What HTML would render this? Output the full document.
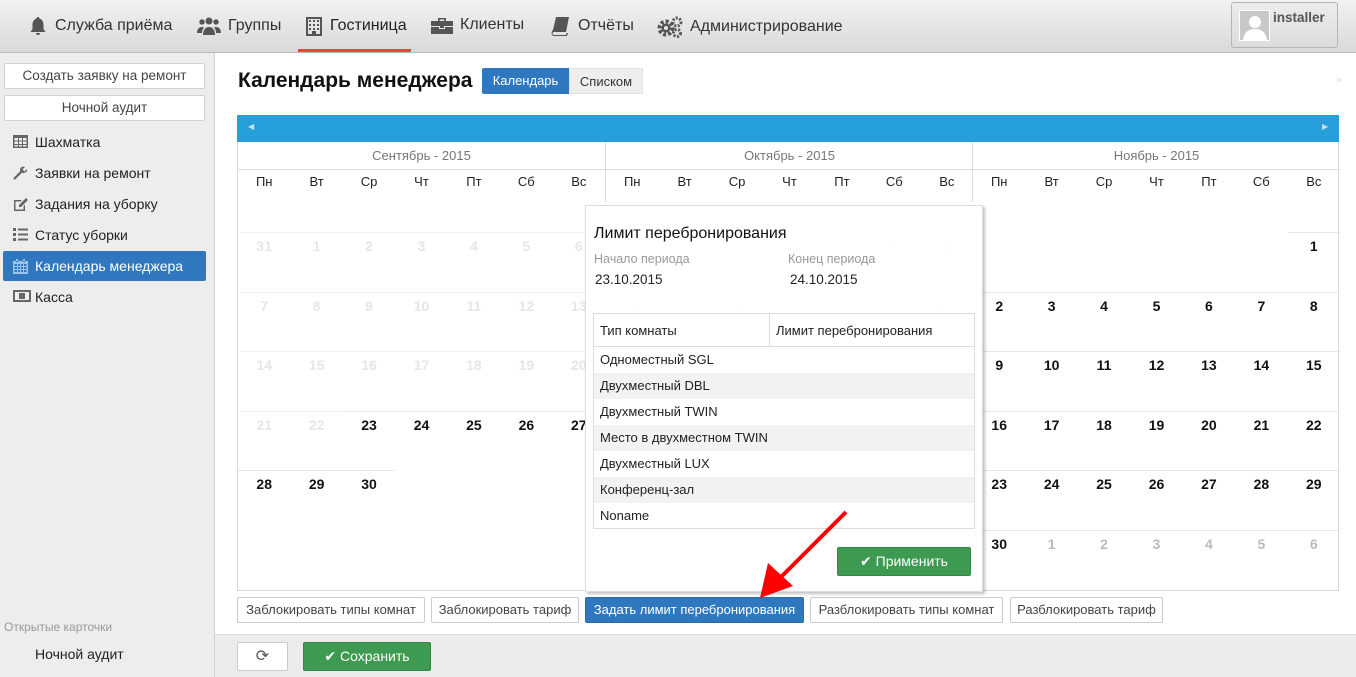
<!DOCTYPE html>
<html><head><meta charset="utf-8">
<style>
*{box-sizing:border-box;margin:0;padding:0}
body{width:1356px;height:677px;overflow:hidden;font-family:"Liberation Sans","DejaVu Sans",sans-serif;background:#fff;position:relative;color:#222}
.abs{position:absolute}
#top{left:0;top:0;width:1356px;height:53px;background:linear-gradient(#f2f2f2,#d9d9d9);border-bottom:1px solid #bdbdbd}
.nav{top:16px;font-size:16px;color:#333;display:flex;align-items:center;gap:7px}
.nav svg{fill:#555}
#side{left:0;top:53px;width:215px;height:624px;background:#ededed;border-right:1px solid #cfcfcf}
.sbtn{position:absolute;left:4px;width:201px;height:26px;background:#fff;border:1px solid #d0d0d0;border-radius:2px;font-size:13.5px;color:#444;text-align:center;line-height:24px}
.mi{position:absolute;left:3px;width:203px;height:30px;font-size:14px;color:#222;line-height:30px;padding-left:32px}
.mi svg{position:absolute;left:10px;top:8px;fill:#666}
.mi.act{background:#2f78bf;color:#fff;border-radius:2px}
.mi.act svg{fill:#9cc3ea}
.cal{position:absolute;top:232px;width:367px;display:grid;grid-template-columns:repeat(7,1fr);grid-auto-rows:59.6px}
.cal div{font-weight:bold;font-size:14px;text-align:center;padding-top:5px;border-top:1px solid #e6e6e6;color:#111}
.cal .e{border-top-color:transparent}
.cal .f{color:#e6e6e6;border-top-color:#f3f3f3}
.cal .n{color:#bbb}
.mh{position:absolute;top:142px;height:28px;width:367px;text-align:center;font-size:13px;color:#777;line-height:28px;border-bottom:1px solid #ddd}
.dn{position:absolute;top:174px;width:367px;display:grid;grid-template-columns:repeat(7,1fr);font-size:13px;color:#222;text-align:center}
.btn{position:absolute;top:597px;height:26px;background:#fff;border:1px solid #ccc;border-radius:2px;font-size:13px;color:#444;line-height:24px;text-align:center}
#pop{left:585px;top:205px;width:398px;height:387px;background:rgba(255,255,255,.93);border:1px solid #ddd;box-shadow:2px 2px 3px rgba(0,0,0,.25)}
.tr{position:absolute;left:0;width:380px;height:26px;font-size:13px;line-height:26px;padding-left:6px;color:#222}
</style></head><body>
<div id="top" class="abs"></div>
<div class="abs nav" style="left:28px"><svg width="20" height="20" viewBox="0 0 20 20"><path d="M10 1c1 0 1.5.7 1.5 1.5C14.5 3.5 15.5 6 15.5 9v4l2 3H2.5l2-3V9c0-3 1-5.5 4-6.5C8.5 1.7 9 1 10 1zM8 17h4a2 2 0 0 1-4 0z"/></svg>Служба приёма</div>
<div class="abs nav" style="left:197px"><svg width="24" height="20" viewBox="0 0 24 20"><circle cx="12" cy="5" r="3.5"/><circle cx="5" cy="6" r="2.7"/><circle cx="19" cy="6" r="2.7"/><path d="M6 19c0-5 2.5-8 6-8s6 3 6 8zM0 17c0-4 2-6 5-6 1 0 1.5.3 2 .6C5.5 13 5 15 5 17zM24 17c0-4-2-6-5-6-1 0-1.5.3-2 .6 1.5 1.4 2 3.4 2 5.4z"/></svg>Группы</div>
<div class="abs nav" style="left:305px;color:#222"><svg width="18" height="20" viewBox="0 0 18 20"><path d="M1 1h16v19H1zM3 3v15h4v-3h4v3h4V3zM4 4h2v2H4zM8 4h2v2H8zM12 4h2v2h-2zM4 8h2v2H4zM8 8h2v2H8zM12 8h2v2h-2zM4 12h2v2H4zM8 12h2v2H8zM12 12h2v2h-2z" fill-rule="evenodd"/></svg>Гостиница</div>
<div class="abs" style="left:298px;top:49px;width:113px;height:3px;background:#e8473a"></div>
<div class="abs nav" style="left:431px"><svg width="22" height="18" viewBox="0 0 22 18"><path d="M7 2h8v3h-1.6V3.5H8.6V5H7zM0 5h22v5H13v2H9v-2H0zM0 11h8v2h6v-2h8v7H0z"/></svg>Клиенты</div>
<div class="abs nav" style="left:551px"><svg width="20" height="20" viewBox="0 0 20 20"><path d="M5 1h13l-3 15H3C1 16 1 19 3 19h12l.5-2H17l-1 3H3C0 20 0 15 2 14z"/></svg>Отчёты</div>
<div class="abs nav" style="left:657px"><svg width="26" height="22" viewBox="0 0 26 22"><circle cx="9" cy="12" r="6.5" fill="none" stroke="#555" stroke-width="4" stroke-dasharray="3 2"/><circle cx="9" cy="12" r="4.5"/><circle cx="9" cy="12" r="2" fill="#e6e6e6"/><circle cx="20" cy="6" r="4" fill="none" stroke="#555" stroke-width="3" stroke-dasharray="2 1.5"/><circle cx="20" cy="17" r="3.5" fill="none" stroke="#555" stroke-width="3" stroke-dasharray="2 1.5"/></svg>Администрирование</div>
<div class="abs" style="left:1231px;top:2px;width:107px;height:46px;border:1px solid #b5b5b5;border-radius:3px;background:linear-gradient(#ececec,#dcdcdc)"></div>
<div class="abs" style="left:1239px;top:10px;width:31px;height:31px;background:#c8c8c8;border:1px solid #fff;overflow:hidden"><svg width="30" height="30" viewBox="0 0 30 30"><circle cx="15" cy="11" r="6" fill="#fff"/><path d="M3 31c0-9 5-13 12-13s12 4 12 13z" fill="#fff"/></svg></div>
<div class="abs" style="left:1273px;top:10px;font-size:13.5px;font-weight:bold;color:#555">installer</div>

<div id="side" class="abs">
<div class="sbtn" style="top:10px">Создать заявку на ремонт</div>
<div class="sbtn" style="top:42px">Ночной аудит</div>
<div class="mi" style="top:74px"><svg width="15" height="13" viewBox="0 0 15 13"><path d="M0 0h15v13H0zM1.5 3v2.5h3.5V3zM6 3v2.5h3V3zM10 3v2.5h3.5V3zM1.5 6.5V9h3.5V6.5zM6 6.5V9h3V6.5zM10 6.5V9h3.5V6.5zM1.5 10v1.5h3.5V10zM6 10v1.5h3V10zM10 10v1.5h3.5V10z" fill-rule="evenodd"/></svg>Шахматка</div>
<div class="mi" style="top:105px"><svg width="15" height="15" viewBox="0 0 15 15"><path d="M14 3l-2.5 2.5-2-2L12 1C10 0 7.5 1 7 3.5c0 .7 0 1 .3 1.6L.8 11.6c-1 1 .5 2.7 1.6 1.6L8.9 6.7c2.6 1 5.6-.8 5.1-3.7z"/></svg>Заявки на ремонт</div>
<div class="mi" style="top:136px"><svg width="16" height="15" viewBox="0 0 16 15"><path d="M1 3h8l-1.5 1.5H2.5v8h8V9L12 7.5V14H1zM13 1l2 2-7 7H6V8z"/></svg>Задания на уборку</div>
<div class="mi" style="top:167px"><svg width="15" height="13" viewBox="0 0 15 13"><path d="M0 0h3v3H0zM5 0.5h10v2H5zM0 5h3v3H0zM5 5.5h10v2H5zM0 10h3v3H0zM5 10.5h10v2H5z"/></svg>Статус уборки</div>
<div class="mi act" style="top:198px"><svg width="15" height="15" viewBox="0 0 15 15"><path d="M0 2h15v13H0zM1.5 5v2h2.5V5zM5 5v2h2V5zM8 5v2h2V5zM11 5v2h2.5V5zM1.5 8v2h2.5V8zM5 8v2h2V8zM8 8v2h2V8zM11 8v2h2.5V8zM1.5 11v2h2.5v-2zM5 11v2h2v-2zM8 11v2h2v-2zM11 11v2h2.5v-2zM3 0h2v3H3zM10 0h2v3h-2z" fill-rule="evenodd"/></svg>Календарь менеджера</div>
<div class="mi" style="top:229px"><svg width="18" height="12" viewBox="0 0 18 12"><path d="M0 0h18v12H0zM2 2v8h14V2zM6 3h6v6H6z" fill-rule="evenodd"/><path d="M8 4h2v4H8z" fill="#666"/></svg>Касса</div>
<div class="abs" style="left:4px;top:567px;font-size:12px;color:#999">Открытые карточки</div>
<div class="abs" style="left:35px;top:593px;font-size:14px;color:#222">Ночной аудит</div>
</div>

<div class="abs" style="left:238px;top:69px;font-size:21px;font-weight:bold;color:#111">Календарь менеджера</div>
<div class="abs" style="left:482px;top:68px;width:87px;height:26px;background:#2f78bf;color:#fff;font-size:13px;line-height:26px;text-align:center;border-radius:2px 0 0 2px">Календарь</div>
<div class="abs" style="left:569px;top:68px;width:74px;height:26px;background:#eee;color:#333;font-size:13px;line-height:26px;text-align:center;border:1px solid #e2e2e2">Списком</div>
<div class="abs" style="left:1337px;top:78px;width:4px;height:4px;border-radius:2px;background:#eee"></div>

<div class="abs" style="left:237px;top:115px;width:1102px;height:27px;background:#279fda"></div>
<div class="abs" style="left:248px;top:122px;font-size:8px;color:#cde">◀</div>
<div class="abs" style="left:1322px;top:122px;font-size:8px;color:#cde">▶</div>
<div class="abs" style="left:237px;top:142px;width:1102px;height:449px;border:1px solid #d8d8d8;border-top:none"></div>
<div class="abs" style="left:605px;top:142px;width:1px;height:60px;background:#ddd"></div>
<div class="abs" style="left:972px;top:142px;width:1px;height:60px;background:#ddd"></div>

<div class="mh" style="left:238px">Сентябрь - 2015</div>
<div class="mh" style="left:606px">Октябрь - 2015</div>
<div class="mh" style="left:973px">Ноябрь - 2015</div>
<div class="dn" style="left:238px"><span>Пн</span><span>Вт</span><span>Ср</span><span>Чт</span><span>Пт</span><span>Сб</span><span>Вс</span></div>
<div class="dn" style="left:606px"><span>Пн</span><span>Вт</span><span>Ср</span><span>Чт</span><span>Пт</span><span>Сб</span><span>Вс</span></div>
<div class="dn" style="left:973px"><span>Пн</span><span>Вт</span><span>Ср</span><span>Чт</span><span>Пт</span><span>Сб</span><span>Вс</span></div>

<div class="cal" style="left:238px">
<div class="f">31</div><div class="f">1</div><div class="f">2</div><div class="f">3</div><div class="f">4</div><div class="f">5</div><div class="f">6</div>
<div class="f">7</div><div class="f">8</div><div class="f">9</div><div class="f">10</div><div class="f">11</div><div class="f">12</div><div class="f">13</div>
<div class="f">14</div><div class="f">15</div><div class="f">16</div><div class="f">17</div><div class="f">18</div><div class="f">19</div><div class="f">20</div>
<div class="f">21</div><div class="f">22</div><div>23</div><div>24</div><div>25</div><div>26</div><div>27</div>
<div>28</div><div>29</div><div>30</div><div class="e"></div><div class="e"></div><div class="e"></div><div class="e"></div>
</div>
<div class="cal" style="left:606px">
<div class="e"></div><div class="e"></div><div class="e"></div><div class="f">1</div><div class="f">2</div><div class="f">3</div><div class="f">4</div>
<div class="f">5</div><div class="f">6</div><div class="f">7</div><div class="f">8</div><div class="f">9</div><div class="f">10</div><div class="f">11</div>
<div class="f">12</div><div class="f">13</div><div class="f">14</div><div class="f">15</div><div class="f">16</div><div class="f">17</div><div class="f">18</div>
<div class="f">19</div><div class="f">20</div><div class="f">21</div><div class="f">22</div><div>23</div><div>24</div><div>25</div>
<div>26</div><div>27</div><div>28</div><div>29</div><div>30</div><div>31</div><div class="e"></div>
</div>
<div class="cal" style="left:973px">
<div class="e"></div><div class="e"></div><div class="e"></div><div class="e"></div><div class="e"></div><div class="e"></div><div>1</div>
<div>2</div><div>3</div><div>4</div><div>5</div><div>6</div><div>7</div><div>8</div>
<div>9</div><div>10</div><div>11</div><div>12</div><div>13</div><div>14</div><div>15</div>
<div>16</div><div>17</div><div>18</div><div>19</div><div>20</div><div>21</div><div>22</div>
<div>23</div><div>24</div><div>25</div><div>26</div><div>27</div><div>28</div><div>29</div>
<div>30</div><div class="n">1</div><div class="n">2</div><div class="n">3</div><div class="n">4</div><div class="n">5</div><div class="n">6</div>
</div>

<div id="pop" class="abs">
<div class="abs" style="left:8px;top:19px;font-size:16px;color:#111">Лимит перебронирования</div>
<div class="abs" style="left:8px;top:46px;font-size:12.5px;color:#999">Начало периода</div>
<div class="abs" style="left:202px;top:46px;font-size:12.5px;color:#999">Конец периода</div>
<div class="abs" style="left:9px;top:66px;font-size:13.5px;color:#222">23.10.2015</div>
<div class="abs" style="left:204px;top:66px;font-size:13.5px;color:#222">24.10.2015</div>
<div class="abs" style="left:7px;top:107px;width:382px;height:216px;border:1px solid #ddd;background:#fff">
<div class="tr" style="top:0;height:33px;line-height:33px;border-bottom:1px solid #ddd">Тип комнаты</div>
<div class="abs" style="left:175px;top:0;height:33px;border-left:1px solid #ddd;font-size:13px;line-height:33px;padding-left:6px;color:#222">Лимит перебронирования</div>
<div class="tr" style="top:33px">Одноместный SGL</div>
<div class="tr" style="top:59px;background:#f2f2f2">Двухместный DBL</div>
<div class="tr" style="top:85px">Двухместный TWIN</div>
<div class="tr" style="top:111px;background:#f2f2f2">Место в двухместном TWIN</div>
<div class="tr" style="top:137px">Двухместный LUX</div>
<div class="tr" style="top:163px;background:#f2f2f2">Конференц-зал</div>
<div class="tr" style="top:189px">Noname</div>
</div>
<div class="abs" style="left:251px;top:341px;width:134px;height:29px;background:#3d9a50;border:1px solid #348745;border-radius:2px;color:#fff;font-size:14px;line-height:27px;text-align:center">✔ Применить</div>
</div>

<div class="btn" style="left:237px;width:188px">Заблокировать типы комнат</div>
<div class="btn" style="left:431px;width:148px">Заблокировать тариф</div>
<div class="btn" style="left:585px;width:219px;background:#2f78bf;border-color:#2a6aa9;color:#fff">Задать лимит перебронирования</div>
<div class="btn" style="left:810px;width:193px">Разблокировать типы комнат</div>
<div class="btn" style="left:1010px;width:153px">Разблокировать тариф</div>

<svg class="abs" style="left:0;top:0" width="1356" height="677"><line x1="846" y1="512" x2="778" y2="580" stroke="#f00" stroke-width="4"/><polygon points="760,598 768,563 793,586" fill="#f00"/></svg>

<div class="abs" style="left:215px;top:634px;width:1141px;height:43px;background:#ececec;border-top:1px solid #ddd"></div>
<div class="abs" style="left:237px;top:642px;width:51px;height:29px;background:#fff;border:1px solid #ccc;border-radius:2px;text-align:center;line-height:27px;font-size:16px;color:#555">⟳</div>
<div class="abs" style="left:303px;top:642px;width:128px;height:29px;background:#3d9a50;border:1px solid #348745;border-radius:2px;color:#fff;font-size:14px;line-height:27px;text-align:center">✔ Сохранить</div>
</body></html>
